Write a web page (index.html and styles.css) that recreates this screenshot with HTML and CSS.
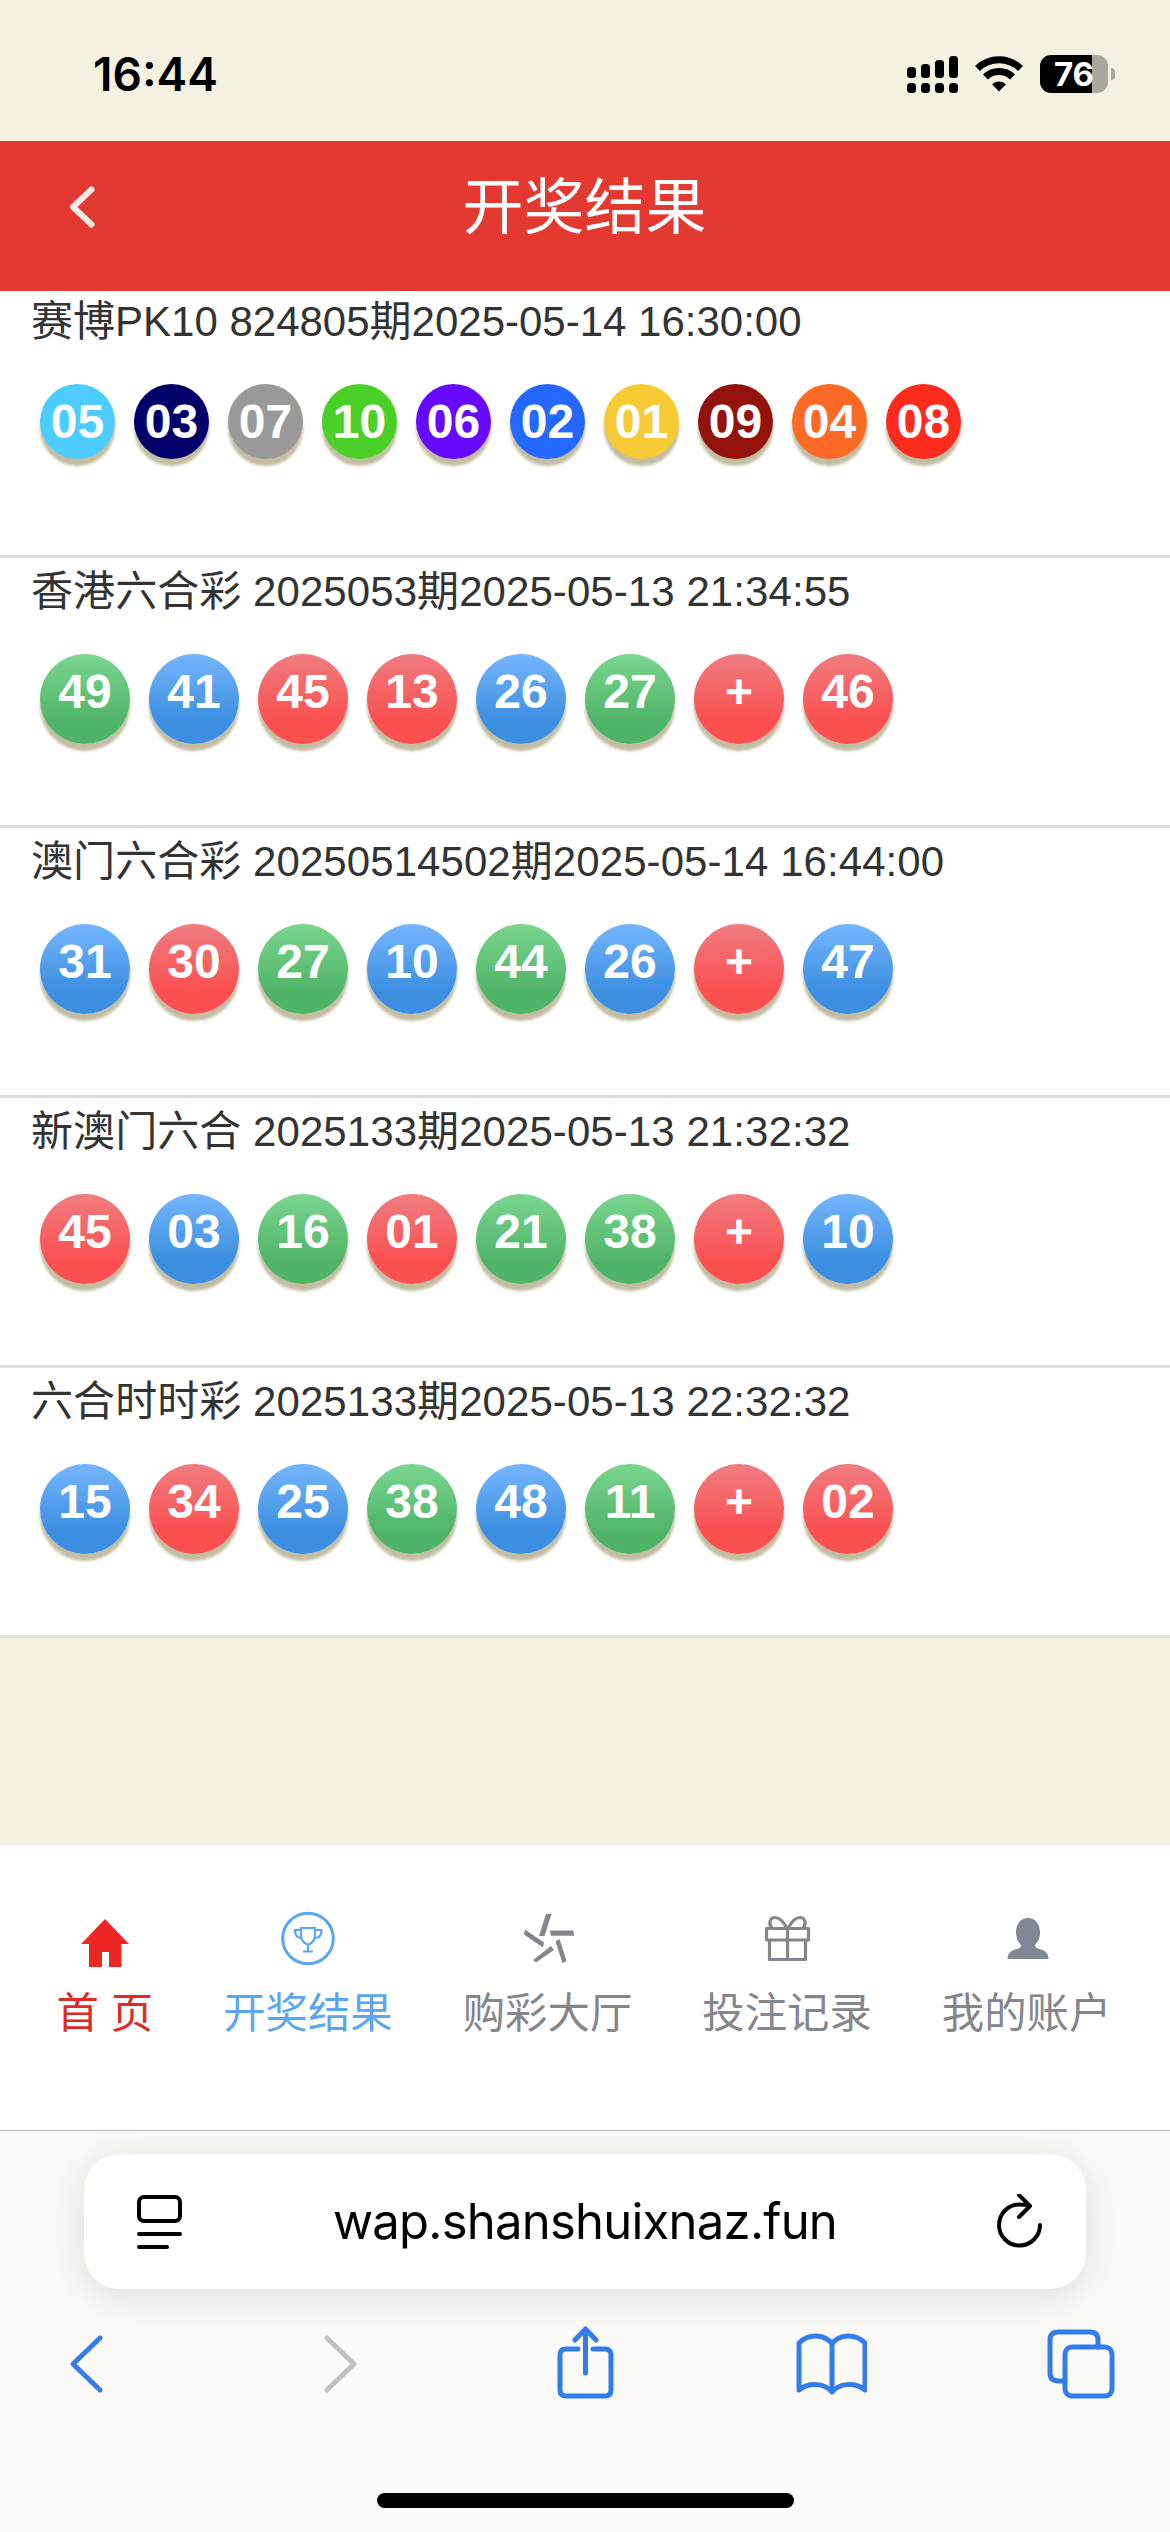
FILE: index.html
```html
<!DOCTYPE html>
<html lang="zh-CN">
<head>
    <meta charset="UTF-8" />
    <meta name="viewport" content="width=device-width, initial-scale=1.0"/>
    <title>开奖结果</title>
    <link rel="stylesheet" href="styles.css">
</head>
<body>
<!-- 状态栏 -->
<div class="status-bar">
    <div class="time">16:44</div>
    <div class="status-icons">
        <svg class="signal" width="51" height="38" viewBox="0 0 51 38">
            <rect x="0" y="12" width="9" height="11" rx="3.5"/>
            <rect x="14" y="9" width="9" height="14" rx="3.5"/>
            <rect x="28" y="5" width="9" height="18" rx="3.5"/>
            <rect x="42" y="1" width="9" height="22" rx="3.5"/>
            <rect x="0" y="28" width="9" height="10" rx="3.5"/>
            <rect x="14" y="28" width="9" height="10" rx="3.5"/>
            <rect x="28" y="28" width="9" height="10" rx="3.5"/>
            <rect x="42" y="28" width="9" height="10" rx="3.5"/>
        </svg>
        <svg class="wifi" width="50" height="38" viewBox="0 0 50 38">
            <path d="M3.500 13.500a31 31 0 0 1 43 0M11.500 22a19.500 19.500 0 0 1 27 0" fill="none" stroke="#000" stroke-width="7"/>
            <path d="M25 36.500l-7-7.200a10 10 0 0 1 14 0z"/>
        </svg>
        <div class="battery"><span>76</span></div>
        <div class="battery-cap"></div>
    </div>
</div>

<!-- 顶部标题 -->
<div class="header">
    <svg class="back" width="26" height="42" viewBox="0 0 26 42">
        <path d="M22.500 3.500L4 21l18.500 17.500" fill="none" stroke="#f3ebe6" stroke-width="6" stroke-linecap="round" stroke-linejoin="round"/>
    </svg>
    <h2>开奖结果</h2>
</div>

<!-- 开奖列表 -->
<div class="list">
    <div class="item first">
        <div class="item-title">赛博PK10 824805期2025-05-14 16:30:00</div>
        <div class="balls pk10">
            <span class="n05">05</span><span class="n03">03</span><span class="n07">07</span><span class="n10">10</span><span class="n06">06</span><span class="n02">02</span><span class="n01">01</span><span class="n09">09</span><span class="n04">04</span><span class="n08">08</span>
        </div>
    </div>
    <div class="item">
        <div class="item-title">香港六合彩 2025053期2025-05-13 21:34:55</div>
        <div class="balls">
            <span class="green">49</span><span class="blue">41</span><span class="red">45</span><span class="red">13</span><span class="blue">26</span><span class="green">27</span><span class="red">+</span><span class="red">46</span>
        </div>
    </div>
    <div class="item">
        <div class="item-title">澳门六合彩 20250514502期2025-05-14 16:44:00</div>
        <div class="balls">
            <span class="blue">31</span><span class="red">30</span><span class="green">27</span><span class="blue">10</span><span class="green">44</span><span class="blue">26</span><span class="red">+</span><span class="blue">47</span>
        </div>
    </div>
    <div class="item">
        <div class="item-title">新澳门六合 2025133期2025-05-13 21:32:32</div>
        <div class="balls">
            <span class="red">45</span><span class="blue">03</span><span class="green">16</span><span class="red">01</span><span class="green">21</span><span class="green">38</span><span class="red">+</span><span class="blue">10</span>
        </div>
    </div>
    <div class="item">
        <div class="item-title">六合时时彩 2025133期2025-05-13 22:32:32</div>
        <div class="balls">
            <span class="blue">15</span><span class="red">34</span><span class="blue">25</span><span class="green">38</span><span class="blue">48</span><span class="green">11</span><span class="red">+</span><span class="red">02</span>
        </div>
    </div>
</div>

<!-- 底部导航 -->
<div class="tabs">
    <div class="tab home">
        <svg width="54" height="60" viewBox="0 0 54 60">
            <path d="M27 10L51 35H43.500V58H31V43H24V58H11V35H3z" fill="#ed2824"/>
        </svg>
        <div>首 页</div>
    </div>
    <div class="tab active">
        <svg width="54" height="60" viewBox="0 0 54 60" fill="none" stroke="#5ba6f2">
            <circle cx="27" cy="29.500" r="25.300" stroke-width="3"/>
            <path d="M20 19h14v8c0 4-3 7-7 9-4-2-7-5-7-9zM20 21h-6c0 5 2 8 6.500 8M34 21h6.500c0 5-2 8-6.500 8M27 36v6M22 42.500h10" stroke-width="2.200"/>
        </svg>
        <div>开奖结果</div>
    </div>
    <div class="tab">
        <svg width="54" height="60" viewBox="0 0 54 60" fill="#85868d">
            <path d="M25 5h5.500L23.500 27h-5.500zM29 21.500h23.500l.5 5.200H30zM4 20.500L3 25.500 22 38.500l1-5zM30 37l3 4-18 12.500-3-2.500zM38.500 30l-4 2.300 7 22 4-2.300z"/>
        </svg>
        <div>购彩大厅</div>
    </div>
    <div class="tab">
        <svg width="54" height="60" viewBox="0 0 54 60" fill="none" stroke="#85868d" stroke-width="3.200" stroke-linejoin="round">
            <path d="M6.500 19.500h42v11.500h-42zM9.500 31h36v19.500h-36zM27.500 19.500v31"/>
            <path d="M27 19c-4-7-8-10.500-12-10.500-5 0-7 6-3 11M28 19c4-7 8-10.500 12-10.500 5 0 7 6 3 11"/>
        </svg>
        <div>投注记录</div>
    </div>
    <div class="tab">
        <svg width="54" height="60" viewBox="0 0 54 60">
            <path d="M28 9c7 0 12 6 12 14 0 6-2 10-5 13 0 2 1 3 4 4 6 1 9.500 4 9.500 10H7.500c0-6 4-9 9.500-10 3-1 4-2 4-4-3-3-5-7-5-13 0-8 5-14 12-14z" fill="#808893"/>
        </svg>
        <div>我的账户</div>
    </div>
</div>

<!-- 浏览器工具栏 -->
<div class="browser">
    <div class="address">
        <svg width="46" height="56" viewBox="0 0 46 56" fill="none" stroke="#000" stroke-width="4" stroke-linecap="round">
            <rect x="3" y="3" width="41" height="24" rx="5"/>
            <path d="M3 40h41M3 53h28"/>
        </svg>
        <div class="url">wap.shanshuixnaz.fun</div>
        <svg width="46" height="56" viewBox="0 0 46 56" fill="none" stroke="#000" stroke-width="4" stroke-linecap="round" stroke-linejoin="round">
            <path d="M43 31a20.500 20.500 0 1 1-20.500-20.500q6 0 10.500 1.500M22 1l11 11L22 23"/>
        </svg>
    </div>
    <div class="toolbar">
        <svg width="72" height="76" viewBox="0 0 72 76">
            <path d="M50 12L23 38l27 26"/>
        </svg>
        <svg class="disabled" width="72" height="76" viewBox="0 0 72 76">
            <path d="M29 12l27 26-27 26"/>
        </svg>
        <svg width="72" height="76" viewBox="0 0 72 76">
            <path d="M31 23H19q-6 0-6 6v35q0 6 6 6h39q6 0 6-6V29q0-6-6-6H46M38.500 47V4M28 14L38.500 3 49 14"/>
        </svg>
        <svg width="72" height="76" viewBox="0 0 72 76">
            <path d="M37 18C30 8 14 7 4 17v47c10-8 26-7 33 2 7-9 23-10 33-2V17C60 7 44 8 37 18zv48"/>
        </svg>
        <svg width="72" height="76" viewBox="0 0 72 76">
            <rect x="22" y="21" width="47" height="49" rx="7"/>
            <path d="M22 55h-6q-9 0-9-8V14q0-8 8-8h32q8 0 8 8v7"/>
        </svg>
    </div>
    <div class="home-line"></div>
</div>
</body>
</html>
```
FILE: styles.css
```css
body {
    margin: 0;
    width: 1170px;
    height: 2532px;
    overflow: hidden;
    display: flex;
    flex-direction: column;
    background: #f4f1e1;
    font-family: "Liberation Sans", "Noto Sans CJK SC", sans-serif;
}
svg {
    display: block;
    flex: none;
}
.status-bar {
    height: 141px;
    flex: none;
    display: flex;
    justify-content: space-between;
    box-sizing: border-box;
    padding: 55px 55px 0 93px;
    font-family: Inter, sans-serif;
}
.time {
    font-size: 46px;
    line-height: 39px;
    font-weight: 600;
}
.status-icons {
    display: flex;
}
.wifi {
    margin: 0 16px;
}
.battery {
    width: 68px;
    height: 38px;
    border-radius: 11px;
    background: linear-gradient(to right, #000 52px, #aaa89d 52px);
    color: #fff;
    font-size: 33px;
    line-height: 38px;
    font-weight: 700;
    text-align: center;
}
.battery-cap {
    width: 4px;
    height: 12px;
    margin: 13px 0 0 3px;
    border-radius: 0 4px 4px 0;
    background: #aaa89d;
}
.header {
    height: 150px;
    flex: none;
    display: flex;
    box-sizing: border-box;
    padding: 0 69px;
    background: #e33930;
    color: #fff;
}
.back {
    margin-top: 45px;
}
.header h2 {
    flex: 1;
    margin: 0 27px 0 0;
    font-size: 61px;
    line-height: 135px;
    font-weight: 400;
    text-align: center;
}
.item {
    height: 267px;
    background: #fff;
    border-bottom: 3px solid #dedede;
}
.first {
    height: 264px;
}
.item-title {
    height: 96px;
    padding-left: 31px;
    font-size: 42px;
    line-height: 67px;
    letter-spacing: 0.07px;
    color: #333;
}
.first .item-title {
    height: 93px;
    line-height: 62px;
    letter-spacing: 0;
}
.balls {
    display: flex;
    gap: 19px;
    padding-left: 40px;
}
.balls span {
    width: 90px;
    height: 90px;
    border-radius: 50%;
    box-shadow: 0 7px 3px #c3bda2;
    color: #fff;
    font-size: 48px;
    line-height: 76px;
    font-weight: bold;
    text-align: center;
}
.pk10 span {
    width: 75px;
    height: 75px;
}
.red {
    background: linear-gradient(#f07d80, #fb4f50 75%);
}
.blue {
    background: linear-gradient(#75b6fd, #3c8ee0 75%);
}
.green {
    background: linear-gradient(#7bd68f, #50b468 75%);
}
.n01 { background: #f6cb35; }
.n02 { background: #2468ff; }
.n03 { background: #00006b; }
.n04 { background: #fd6a25; }
.n05 { background: #4dcdff; }
.n06 { background: #6709ff; }
.n07 { background: #999; }
.n08 { background: #fd2b1d; }
.n09 { background: #93130c; }
.n10 { background: #4bd02a; }
.tabs {
    margin-top: auto;
    height: 287px;
    flex: none;
    display: flex;
    justify-content: center;
    gap: 70px;
    box-sizing: border-box;
    padding: 64px 2px 0 0;
    background: #fff;
    border-top: 1px solid #e9e6dc;
    border-bottom: 1px solid #bbb;
}
.tab {
    display: flex;
    flex-direction: column;
    align-items: center;
    font-size: 42.4px;
    line-height: 60px;
    color: #85868b;
}
.tab div {
    margin-top: 15px;
}
.home {
    color: #dd2c26;
}
.active {
    color: #5ba6f2;
}
.browser {
    height: 401px;
    flex: none;
    display: flex;
    flex-direction: column;
    align-items: center;
    background: #fbfaf6;
}
.address {
    width: 1002px;
    height: 135px;
    margin-top: 23px;
    display: flex;
    align-items: center;
    justify-content: space-between;
    box-sizing: border-box;
    padding: 0 43px 0 52px;
    border-radius: 36px;
    background: #fff;
    box-shadow: 0 6px 40px rgba(0, 0, 0, 0.12);
}
.url {
    margin-right: 9px;
    font-family: Inter, sans-serif;
    font-size: 49px;
    letter-spacing: -0.75px;
}
.toolbar {
    width: 100%;
    display: flex;
    justify-content: space-between;
    box-sizing: border-box;
    padding: 0 55px 0 50px;
    margin-top: 37px;
    fill: none;
    stroke: #337cee;
    stroke-width: 5;
    stroke-linecap: round;
    stroke-linejoin: round;
}
.disabled {
    stroke: #c2c1be;
}
.home-line {
    width: 417px;
    height: 15px;
    margin-top: 91px;
    border-radius: 8px;
    background: #000;
}
```
